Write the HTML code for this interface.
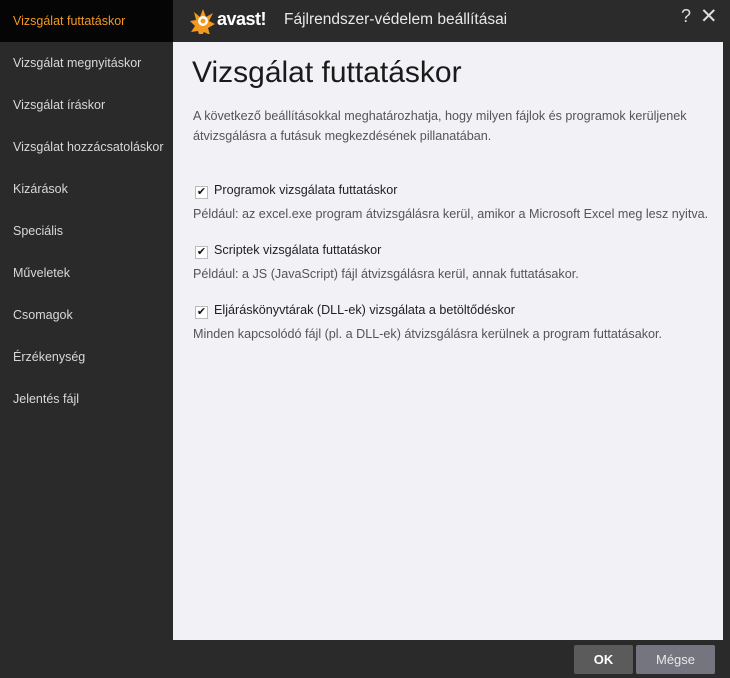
<!DOCTYPE html>
<html><head><meta charset="utf-8"><style>
*{margin:0;padding:0;box-sizing:border-box}
body{width:730px;height:678px;background:#2a2a2a;font-family:"Liberation Sans","DejaVu Sans",sans-serif;position:relative;overflow:hidden}
.side{position:absolute;left:0;top:0;width:173px;height:640px;background:#2a2a2a}
.side div{height:42px;line-height:43px;padding-left:13px;font-size:12.5px;color:#d8d8d8}
.side .sel{background:#050505;color:#f39a1e}
.head{position:absolute;left:173px;top:0;width:557px;height:42px;background:#2b2b2b}
.main{position:absolute;left:173px;top:42px;width:550px;height:598px;background:#f1f1f6}
h1{position:absolute;left:19px;top:14px;font-weight:normal;font-size:30px;color:#1a1a1a}
.t{position:absolute;font-size:12.6px;color:#555;line-height:20px}
.cb{position:absolute;font-size:12.6px;color:#222}
.cb span{display:inline-block;width:13px;height:13px;border:1px solid #bbb;background:#fff;vertical-align:-1px;margin-right:6px;font-size:11px;line-height:11px;text-align:center;color:#111}
.btn{position:absolute;top:645px;height:29px;line-height:29px;text-align:center;font-size:13px;border-radius:2px}
</style></head><body>
<div class="side">
<div class="sel">Vizsgálat futtatáskor</div>
<div>Vizsgálat megnyitáskor</div>
<div>Vizsgálat íráskor</div>
<div>Vizsgálat hozzácsatoláskor</div>
<div>Kizárások</div>
<div>Speciális</div>
<div>Műveletek</div>
<div>Csomagok</div>
<div>Érzékenység</div>
<div>Jelentés fájl</div>
</div>
<div class="head">
<svg style="position:absolute;left:17px;top:8px" width="26" height="26" viewBox="0 0 26 26"><path d="M4 4l6 5 3-8 3 8 7-4-4 8 6 3-7 4 2 7-6-3-4 6-2-7-7 1 4-6-5-5 6-1z" fill="#f39a1e"/><circle cx="13" cy="13" r="5" fill="#fff"/><circle cx="13" cy="13" r="2.5" fill="#f39a1e"/></svg>
<div style="position:absolute;left:44px;top:9px;font-size:18px;font-weight:bold;color:#fff;letter-spacing:-0.5px">avast!</div>
<div style="position:absolute;left:111px;top:11px;font-size:15.5px;color:#e8e8e8">Fájlrendszer-védelem beállításai</div>
<div style="position:absolute;left:508px;top:6px;font-size:18px;color:#ddd">?</div>
<div style="position:absolute;left:527px;top:4px;font-size:21px;color:#ddd">✕</div>
</div>
<div class="main">
<h1>Vizsgálat futtatáskor</h1>
<div class="t" style="left:20px;top:64px">A következő beállításokkal meghatározhatja, hogy milyen fájlok és programok kerüljenek<br>átvizsgálásra a futásuk megkezdésének pillanatában.</div>
<div class="cb" style="left:22px;top:141px"><span>✔</span>Programok vizsgálata futtatáskor</div>
<div class="t" style="left:20px;top:162px">Például: az excel.exe program átvizsgálásra kerül, amikor a Microsoft Excel meg lesz nyitva.</div>
<div class="cb" style="left:22px;top:201px"><span>✔</span>Scriptek vizsgálata futtatáskor</div>
<div class="t" style="left:20px;top:222px">Például: a JS (JavaScript) fájl átvizsgálásra kerül, annak futtatásakor.</div>
<div class="cb" style="left:22px;top:261px"><span>✔</span>Eljáráskönyvtárak (DLL-ek) vizsgálata a betöltődéskor</div>
<div class="t" style="left:20px;top:282px">Minden kapcsolódó fájl (pl. a DLL-ek) átvizsgálásra kerülnek a program futtatásakor.</div>
</div>
<div class="btn" style="left:574px;width:59px;background:#5b5b5b;color:#fff;font-weight:bold">OK</div>
<div class="btn" style="left:636px;width:79px;background:#75757f;color:#e8e8e8">Mégse</div>
</body></html>
